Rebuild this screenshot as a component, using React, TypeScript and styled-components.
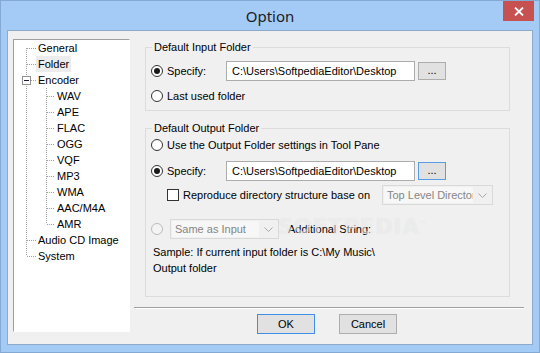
import React from 'react';
import styled, {createGlobalStyle} from 'styled-components';

const uiFont = `"Liberation Sans", Arial, sans-serif`;

const GlobalStyle = createGlobalStyle`
  html, body {
    margin: 0;
    padding: 0;
    background: #a4cbf6;
  }
  body {
    font-family: ${uiFont};
    font-size: 11px;
    color: #000;
  }
`;

type RailProps = {
  $x: number;
  $w: number;
  $up?: boolean;
  $down?: boolean;
  $h?: boolean;
};

const dotV = 'repeating-linear-gradient(to bottom, #a0a0a0 0 1px, transparent 1px 2px)';
const dotH = 'repeating-linear-gradient(to right, #a0a0a0 0 1px, transparent 1px 2px)';

// dotted tree connectors, one layer per segment
function railBackground(p: RailProps) {
  const image: string[] = [];
  const pos: string[] = [];
  const size: string[] = [];
  if (p.$up) {
    image.push(dotV);
    pos.push(`${p.$x}px 0`);
    size.push('1px 8px');
  }
  if (p.$down) {
    image.push(dotV);
    pos.push(`${p.$x}px 8px`);
    size.push('1px 8px');
  }
  if (p.$h) {
    image.push(dotH);
    pos.push(`${p.$x + 1}px 8px`);
    size.push(`${p.$w - p.$x - 1}px 1px`);
  }
  if (!image.length) return 'background: none;';
  return `
    background-image: ${image.join(', ')};
    background-position: ${pos.join(', ')};
    background-size: ${size.join(', ')};
    background-repeat: no-repeat;
  `;
}

const codecs = ['WAV', 'APE', 'FLAC', 'OGG', 'VQF', 'MP3', 'WMA', 'AAC/M4A', 'AMR'];

export default function App() {
  return (
    <>
      <GlobalStyle/>
      <Window>
        <TitleBar>
          <span/>
          <Title>Option</Title>
          <CloseButton>
            <svg width="10" height="9" viewBox="0 0 10 9">
              <path d="M1 0.5 L9 8.5 M9 0.5 L1 8.5" stroke="#fff" strokeWidth="1.8" fill="none"/>
            </svg>
          </CloseButton>
        </TitleBar>

        <Client>
          <Tree>
            <TreeRow><Rail $x={12} $w={22} $down $h/><TreeLabel>General</TreeLabel></TreeRow>
            <TreeRow><Rail $x={12} $w={22} $up $down $h/><TreeLabel $selected>Folder</TreeLabel></TreeRow>
            <TreeRow>
              <Rail $x={12} $w={22} $up $down $h><Expander/></Rail>
              <TreeLabel>Encoder</TreeLabel>
            </TreeRow>
            {codecs.map((c, i) => (
              <TreeRow key={c}>
                <Rail $x={12} $w={22} $up $down/>
                <Rail $x={10} $w={19} $up $down={i < codecs.length - 1} $h/>
                <TreeLabel>{c}</TreeLabel>
              </TreeRow>
            ))}
            <TreeRow><Rail $x={12} $w={22} $up $down $h/><TreeLabel>Audio CD Image</TreeLabel></TreeRow>
            <TreeRow><Rail $x={12} $w={22} $up $h/><TreeLabel>System</TreeLabel></TreeRow>
          </Tree>

          <Content>
            <Group $mt={1}>
              <Legend>Default Input Folder</Legend>
              <Row $h={20} $mt={7}>
                <Radio $checked/>
                <OptionLabel $w={59}>Specify:</OptionLabel>
                <PathField>{'C:\\Users\\SoftpediaEditor\\Desktop'}</PathField>
                <Browse>...</Browse>
              </Row>
              <Row $h={18} $mt={6}>
                <Radio/>
                <OptionLabel>Last used folder</OptionLabel>
              </Row>
            </Group>

            <Group $mt={10} $pb={21}>
              <Legend>Default Output Folder</Legend>
              <Row $h={16} $mt={2}>
                <Radio/>
                <OptionLabel>Use the Output Folder settings in Tool Pane</OptionLabel>
              </Row>
              <Row $h={20} $mt={8}>
                <Radio $checked/>
                <OptionLabel $w={59}>Specify:</OptionLabel>
                <PathField>{'C:\\Users\\SoftpediaEditor\\Desktop'}</PathField>
                <Browse $focused>...</Browse>
              </Row>
              <Row $h={20} $mt={4} $indent={16}>
                <CheckBox/>
                <OptionLabel $w={199}>Reproduce directory structure base on</OptionLabel>
                <Select $w={111}>
                  <SelectText>Top Level Director</SelectText>
                  <SelectArrow>
                    <svg width="9" height="5" viewBox="0 0 9 5">
                      <path d="M0.5 0.5 L4.5 4.5 L8.5 0.5" stroke="#a6a6a6" fill="none"/>
                    </svg>
                  </SelectArrow>
                </Select>
              </Row>
              <Row $h={20} $mt={14}>
                <Radio $disabled/>
                <Select $w={109} $ml={7}>
                  <SelectText>Same as Input</SelectText>
                  <SelectArrow>
                    <svg width="9" height="5" viewBox="0 0 9 5">
                      <path d="M0.5 0.5 L4.5 4.5 L8.5 0.5" stroke="#a6a6a6" fill="none"/>
                    </svg>
                  </SelectArrow>
                </Select>
                <OptionLabel $ml={9}>Additional String:</OptionLabel>
              </Row>
              <Note $mt={6}>{'Sample: If current input folder is C:\\My Music\\'}</Note>
              <Note $mt={2}>Output folder</Note>
            </Group>

            <Separator/>

            <ButtonRow>
              <DialogButton $default>OK</DialogButton>
              <DialogButton>Cancel</DialogButton>
            </ButtonRow>
          </Content>

          <Watermark>SOFTPEDIA<sup>™</sup></Watermark>
        </Client>
      </Window>
    </>
  );
}

const Window = styled.div`
  width: 540px;
  height: 353px;
  box-sizing: border-box;
  border: 1px solid #84a9d3;
  background: #a4cbf6;
  display: flex;
  flex-direction: column;
`;

const TitleBar = styled.div`
  height: 29px;
  display: grid;
  grid-template-columns: 1fr auto 1fr;
  flex: none;
`;

const Title = styled.div`
  align-self: center;
  font-family: "Noto Sans", "Open Sans", sans-serif;
  font-size: 15px;
  color: #1c1c1c;
`;

const CloseButton = styled.div`
  justify-self: end;
  align-self: start;
  margin-right: 5px;
  width: 31px;
  height: 20px;
  background: #c75050;
  display: flex;
  align-items: center;
  justify-content: center;
`;

const Client = styled.div`
  position: relative;
  flex: 1;
  margin: 0 6px 7px 6px;
  border: 1px solid #8eaacb;
  background: #f0f0f0;
  display: flex;
  padding: 8px 0 0 5px;
`;

const Tree = styled.div`
  width: 117px;
  height: 293px;
  box-sizing: border-box;
  flex: none;
  background: #fff;
  border-left: 1px solid #a0a0a0;
  border-top: 1px solid #a0a0a0;
  border-right: 1px solid #fff;
  border-bottom: 1px solid #fff;
  display: flex;
  flex-direction: column;
`;

const TreeRow = styled.div`
  display: flex;
  height: 16px;
  align-items: center;
`;

const Rail = styled.span<RailProps>`
  display: flex;
  align-items: center;
  flex: none;
  width: ${p => p.$w}px;
  height: 16px;
  box-sizing: border-box;
  padding-left: ${p => p.$x - 4}px;
  ${p => railBackground(p)}
`;

const Expander = styled.span`
  width: 9px;
  height: 9px;
  margin-top: 1px;
  box-sizing: border-box;
  border: 1px solid #919191;
  background: #fff;
  display: flex;
  align-items: center;
  justify-content: center;

  &::after {
    content: '';
    width: 5px;
    height: 1px;
    background: #1b1b3a;
  }
`;

const TreeLabel = styled.span<{$selected?: boolean}>`
  padding: 0 2px;
  height: 16px;
  line-height: 16px;
  white-space: nowrap;
  background: ${p => p.$selected ? '#ececec' : 'transparent'};
`;

const Content = styled.div`
  flex: 1;
  margin-left: 4px;
  padding-right: 8px;
  display: flex;
  flex-direction: column;
`;

const Group = styled.fieldset<{$mt: number; $pb?: number}>`
  margin: ${p => p.$mt}px 14px 0 11px;
  padding: 0 0 ${p => p.$pb ?? 5}px 0;
  border: 1px solid #dcdcdc;
  min-inline-size: 0;
`;

const Legend = styled.legend`
  margin-left: 6px;
  padding: 0 2px;
  font-size: 11px;
  line-height: 14px;
`;

const Row = styled.div<{$h: number; $mt: number; $indent?: number}>`
  display: flex;
  align-items: center;
  height: ${p => p.$h}px;
  margin-top: ${p => p.$mt}px;
  padding-left: ${p => 5 + (p.$indent ?? 0)}px;
`;

const Radio = styled.span<{$checked?: boolean; $disabled?: boolean}>`
  width: 12px;
  height: 12px;
  flex: none;
  box-sizing: border-box;
  border-radius: 50%;
  border: 1px solid ${p => p.$disabled ? '#bcbcbc' : '#333'};
  background: ${p => p.$disabled ? '#f4f4f4' : '#fff'};
  display: flex;
  align-items: center;
  justify-content: center;

  &::after {
    content: '';
    display: ${p => p.$checked ? 'block' : 'none'};
    width: 6px;
    height: 6px;
    border-radius: 50%;
    background: #1a1a1a;
  }
`;

const CheckBox = styled.span`
  width: 12px;
  height: 12px;
  flex: none;
  box-sizing: border-box;
  border: 1px solid #333;
  background: #fff;
`;

const OptionLabel = styled.span<{$w?: number; $ml?: number}>`
  margin-left: ${p => p.$ml ?? 4}px;
  ${p => p.$w ? `width: ${p.$w}px; flex: none;` : ''}
  white-space: nowrap;
`;

const PathField = styled.div`
  width: 189px;
  height: 20px;
  flex: none;
  box-sizing: border-box;
  border: 1px solid #acacac;
  background: #fff;
  padding-left: 5px;
  display: flex;
  align-items: center;
  white-space: nowrap;
  overflow: hidden;
`;

const Browse = styled.div<{$focused?: boolean}>`
  width: 28px;
  height: 18px;
  margin-left: 3px;
  flex: none;
  box-sizing: border-box;
  border: 1px solid ${p => p.$focused ? '#569de5' : '#adadad'};
  background: #e1e1e1;
  display: flex;
  align-items: center;
  justify-content: center;
  padding-bottom: 2px;
`;

const Select = styled.div<{$w: number; $ml?: number}>`
  width: ${p => p.$w}px;
  height: 20px;
  margin-left: ${p => p.$ml ?? 0}px;
  flex: none;
  box-sizing: border-box;
  border: 1px solid #d9d9d9;
  background: #f0f0f0;
  display: flex;
  align-items: stretch;
  padding: 1px;
`;

const SelectText = styled.span`
  flex: 1;
  background: #f7f7f7;
  color: #868686;
  padding-left: 3px;
  display: flex;
  align-items: center;
  white-space: nowrap;
  overflow: hidden;
`;

const SelectArrow = styled.span`
  width: 18px;
  display: flex;
  align-items: center;
  justify-content: center;
`;

const Note = styled.div<{$mt: number}>`
  margin-top: ${p => p.$mt}px;
  padding-left: 7px;
  line-height: 14px;
  white-space: nowrap;
`;

const Separator = styled.div`
  margin-top: 10px;
  border-top: 1px solid #a0a0a0;
  border-bottom: 1px solid #fff;
`;

const ButtonRow = styled.div`
  display: flex;
  justify-content: center;
  gap: 24px;
  margin-top: 5px;
  padding-right: 4px;
`;

const DialogButton = styled.div<{$default?: boolean}>`
  width: 58px;
  height: 20px;
  box-sizing: border-box;
  border: 1px solid ${p => p.$default ? '#3c8ee6' : '#adadad'};
  background: #e1e1e1;
  display: flex;
  align-items: center;
  justify-content: center;
`;

const Watermark = styled.div`
  position: absolute;
  left: 270px;
  top: 184px;
  font-family: "DejaVu Sans", sans-serif;
  font-weight: bold;
  font-size: 21px;
  letter-spacing: 1px;
  color: rgba(255, 255, 255, 0.5);
  text-shadow: 0 0 1px rgba(0, 0, 0, 0.1);
  pointer-events: none;

  sup {
    font-size: 7px;
    font-weight: normal;
  }
`;
